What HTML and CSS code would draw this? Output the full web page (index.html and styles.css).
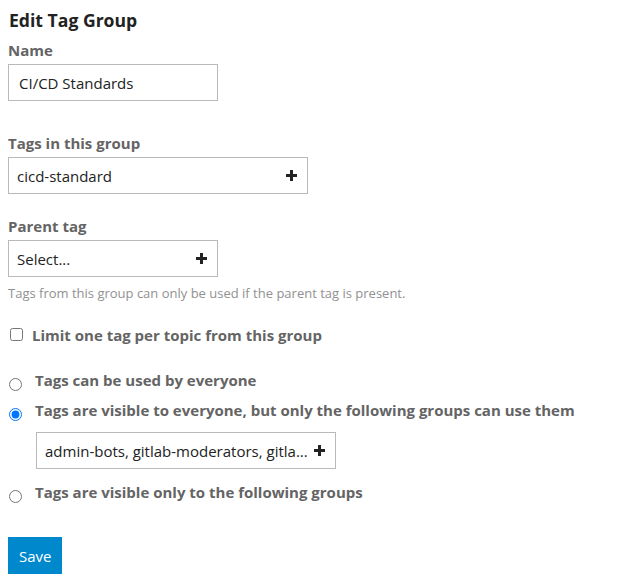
FILE: index.html
```html
<!DOCTYPE html>
<html lang="en">
<head>
<meta charset="utf-8">
<title>Edit Tag Group</title>
<link rel="stylesheet" href="styles.css">
</head>
<body>
<form class="tag-group">
  <h3 class="title">Edit Tag Group</h3>

  <div class="field field-name">
    <label class="label">Name</label>
    <div class="text-input">CI/CD Standards</div>
  </div>

  <div class="field field-tags">
    <label class="label">Tags in this group</label>
    <div class="chooser wide">
      <span class="chooser-text">cicd-standard</span>
      <svg class="plus" viewBox="0 0 11 11" width="11" height="11"><rect x="4" y="0" width="3" height="11"/><rect x="0" y="4" width="11" height="3"/></svg>
    </div>
  </div>

  <div class="field field-parent">
    <label class="label">Parent tag</label>
    <div class="chooser narrow">
      <span class="chooser-text">Select...</span>
      <svg class="plus" viewBox="0 0 11 11" width="11" height="11"><rect x="4" y="0" width="3" height="11"/><rect x="0" y="4" width="11" height="3"/></svg>
    </div>
    <p class="help">Tags from this group can only be used if the parent tag is present.</p>
  </div>

  <label class="check-row">
    <input type="checkbox" class="checkbox">
    <span class="option-text">Limit one tag per topic from this group</span>
  </label>

  <div class="permissions">
    <label class="radio-row">
      <input type="radio" name="perm" class="radio">
      <span class="option-text">Tags can be used by everyone</span>
    </label>
    <label class="radio-row">
      <input type="radio" name="perm" class="radio" checked>
      <span class="option-text">Tags are visible to everyone, but only the following groups can use them</span>
    </label>
    <div class="chooser groups">
      <span class="chooser-text">admin-bots, gitlab-moderators, gitla...</span>
      <svg class="plus" viewBox="0 0 11 11" width="11" height="11"><rect x="4" y="0" width="3" height="11"/><rect x="0" y="4" width="11" height="3"/></svg>
    </div>
    <label class="radio-row last">
      <input type="radio" name="perm" class="radio">
      <span class="option-text">Tags are visible only to the following groups</span>
    </label>
  </div>

  <button type="button" class="save">Save</button>
</form>
</body>
</html>
```

FILE: styles.css
```css
html, body {
  background: #ffffff;
}

body {
  margin: 8px;
  font-family: "Open Sans", "Noto Sans", sans-serif;
  color: #222222;
}

.tag-group {
  display: flex;
  flex-direction: column;
  align-items: flex-start;
}

.title {
  margin: 0;
  font-size: 17.6px;
  line-height: 24px;
  font-weight: 700;
  color: #222222;
  padding-left: 1px;
}

.field {
  display: flex;
  flex-direction: column;
  align-items: flex-start;
}

.field-name { margin-top: 8px; }
.field-tags { margin-top: 32px; }
.field-parent { margin-top: 22px; }

.label {
  font-size: 15px;
  line-height: 20px;
  font-weight: 700;
  color: #646464;
  margin-bottom: 4px;
}

.text-input {
  box-sizing: border-box;
  width: 210px;
  height: 37px;
  border: 1px solid #b9b9b9;
  padding: 0 10px;
  display: flex;
  align-items: center;
  font-size: 15px;
  color: #222222;
}

.chooser {
  box-sizing: border-box;
  height: 37px;
  border: 1px solid #b9b9b9;
  padding: 0 10px 0 8px;
  display: flex;
  align-items: center;
  justify-content: space-between;
  gap: 6px;
  font-size: 15px;
  color: #222222;
}

.chooser.wide { width: 300px; }
.chooser.narrow { width: 210px; }
.chooser.groups { width: 300px; margin-left: 28px; margin-top: 12px; }

.chooser-text {
  white-space: nowrap;
  overflow: hidden;
}

.plus {
  flex: none;
  fill: #222222;
}

.help {
  margin: 7px 0 0;
  font-size: 13px;
  line-height: 18px;
  color: #919191;
}

.check-row {
  margin-top: 23px;
  display: flex;
  align-items: flex-start;
  line-height: 20px;
}

.checkbox {
  width: 13px;
  height: 13px;
  margin: 3px 9px 0 2px;
  flex: none;
}

.option-text {
  font-size: 15px;
  font-weight: 700;
  color: #646464;
  line-height: 20px;
}

.permissions {
  margin-top: 25px;
  display: flex;
  flex-direction: column;
  align-items: flex-start;
}

.radio-row {
  display: flex;
  align-items: flex-start;
  line-height: 20px;
  height: 20px;
}

.radio-row + .radio-row { margin-top: 10px; }
.radio-row.last { margin-top: 13px; }

.radio {
  width: 13px;
  height: 13px;
  margin: 8px 13px -1px 1px;
  flex: none;
}

.save {
  margin-top: 35px;
  box-sizing: border-box;
  height: 37px;
  padding: 0 11px;
  border: none;
  background: #0088cc;
  color: #ffffff;
  font-family: "Open Sans", "Noto Sans", sans-serif;
  font-size: 15px;
  line-height: 20px;
}
```
